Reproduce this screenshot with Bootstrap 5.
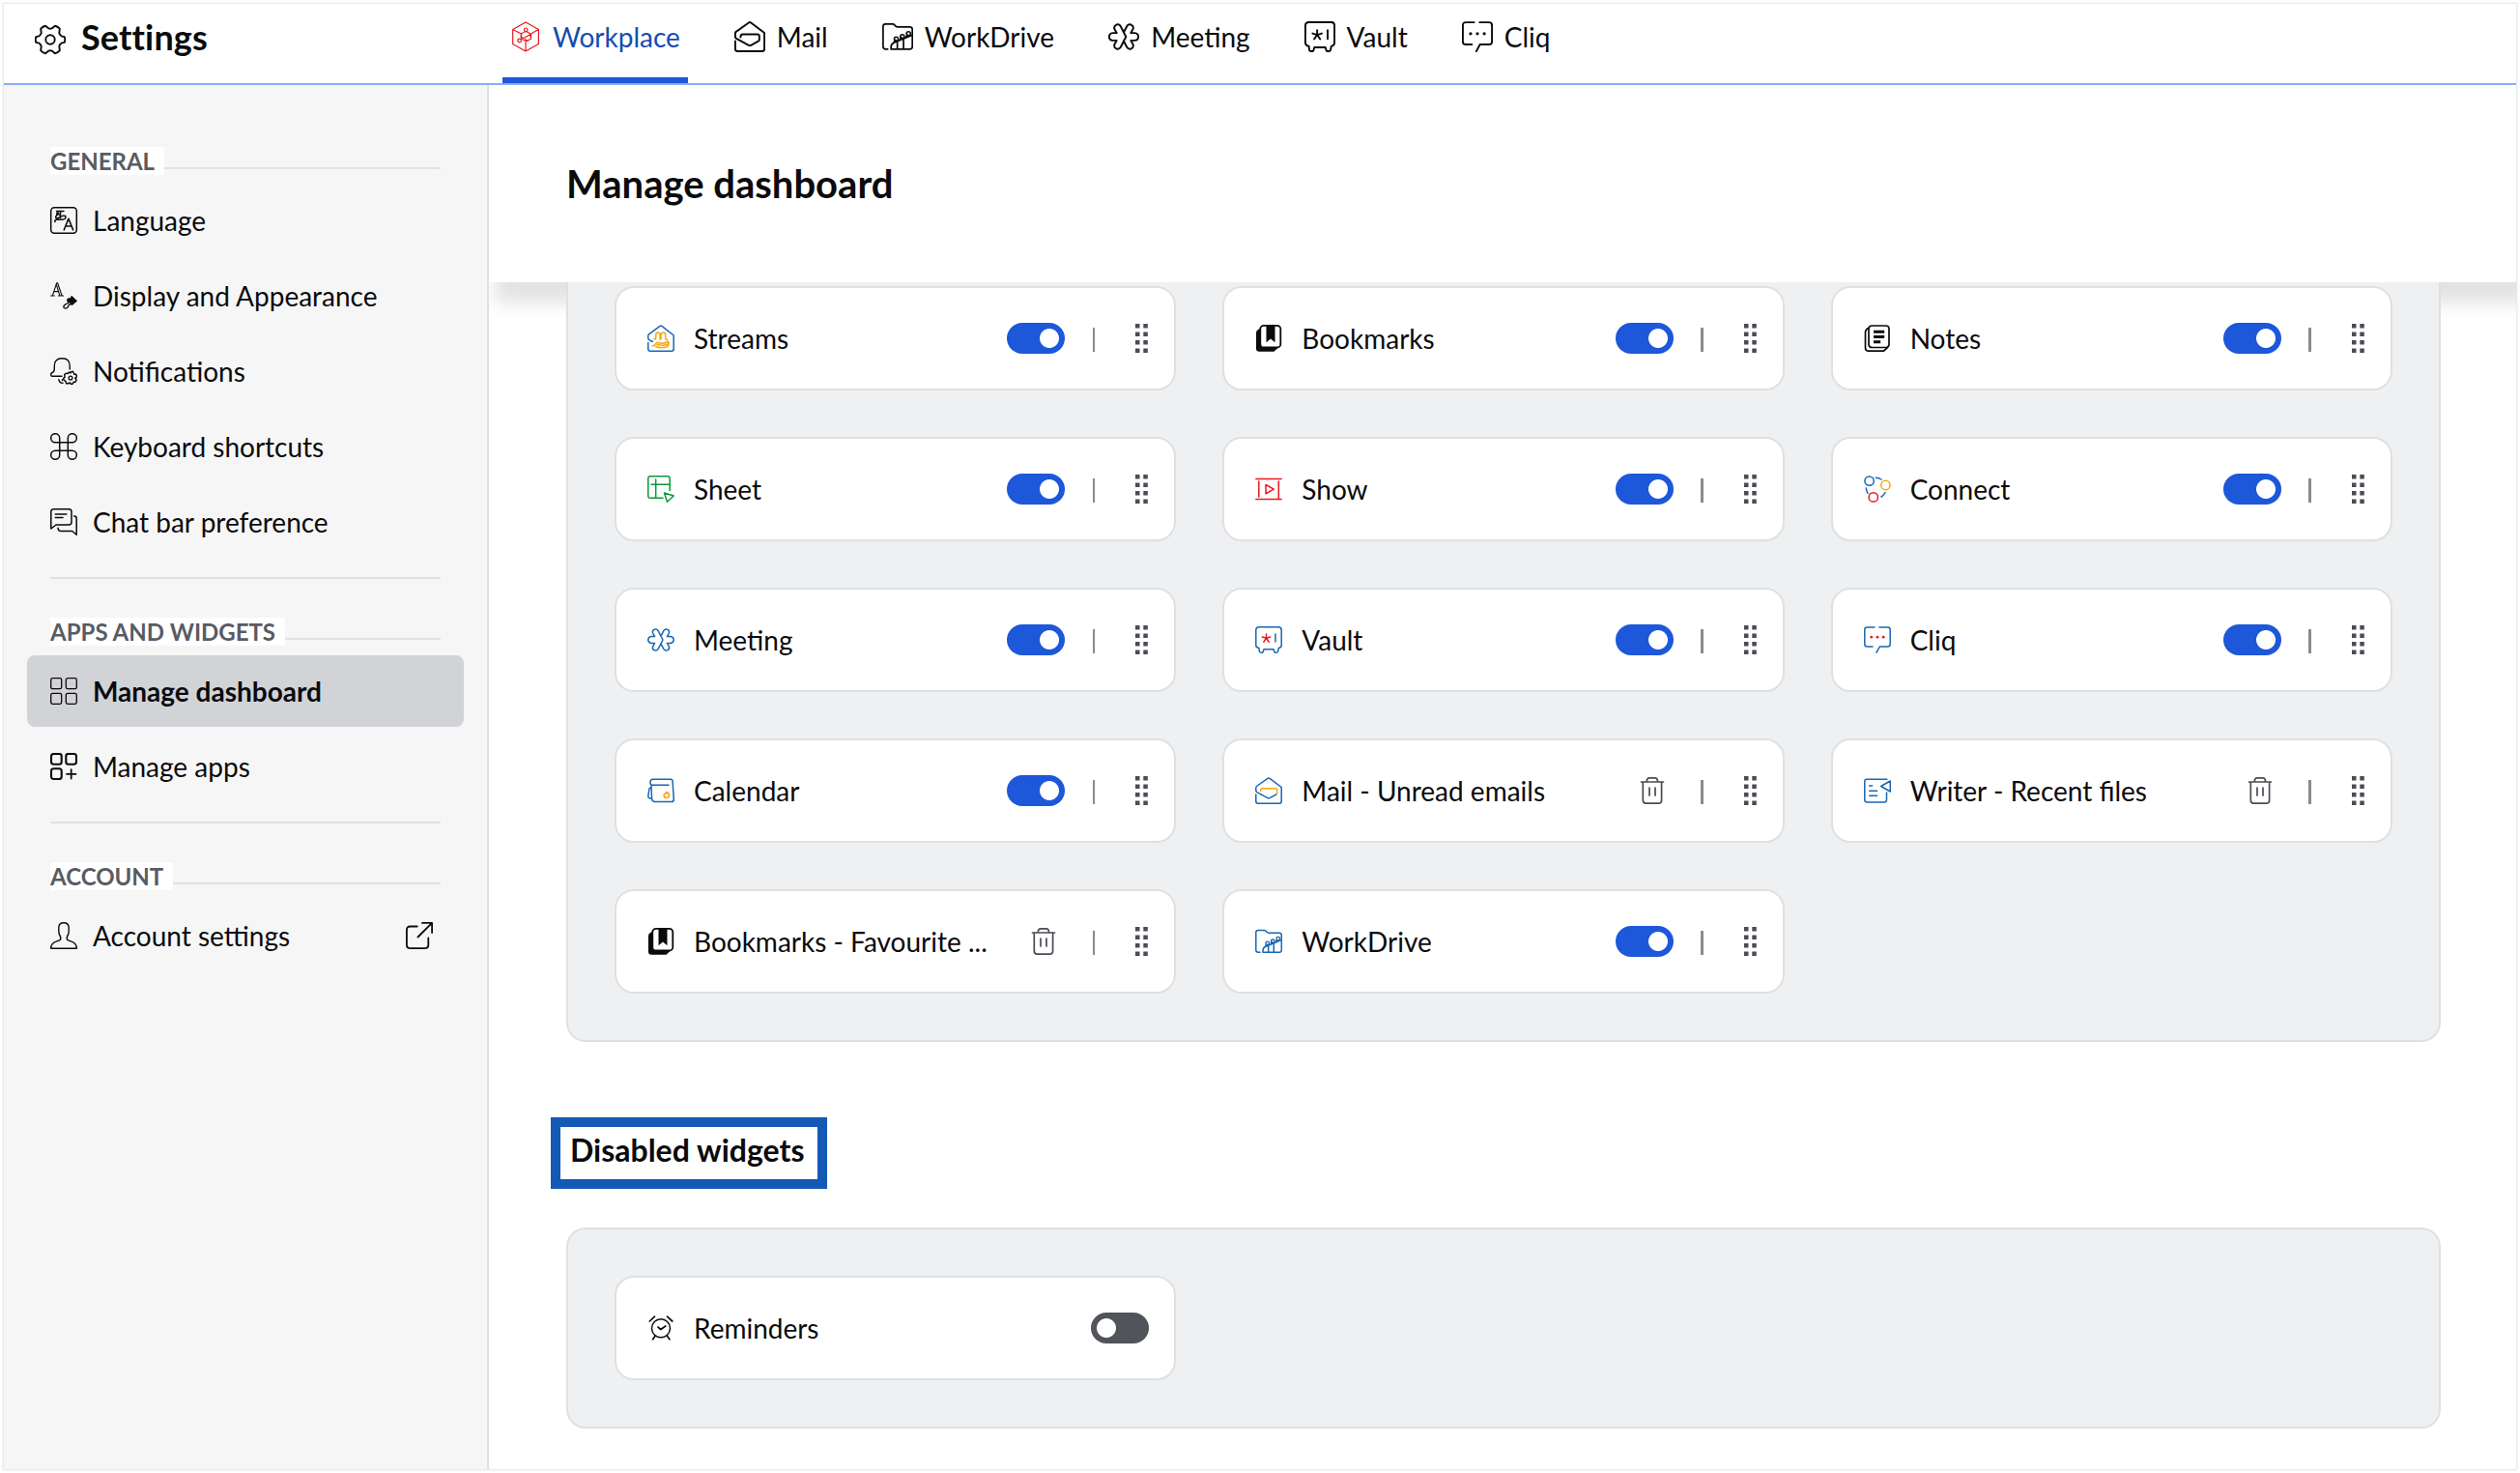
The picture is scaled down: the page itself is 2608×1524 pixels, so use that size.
<!DOCTYPE html>
<html lang="en">
<head>
<meta charset="utf-8">
<meta name="viewport" content="width=device-width, initial-scale=1">
<title>Settings</title>
<link href="https://cdn.jsdelivr.net/npm/bootstrap@5.3.0/dist/css/bootstrap.min.css" rel="stylesheet">
<style>
body{font-family:Lato,"Noto Sans",sans-serif;font-size:28px;line-height:34px;color:#0b0b0d;background:#fff;height:1524px;overflow:hidden;padding:3px}
.frame{height:1518px;border:1px solid #e6ebef;box-shadow:0 0 3px #e6ebef;overflow:hidden}
svg{fill:none;stroke-linecap:round;stroke-linejoin:round;flex:none;display:block}
.ic{width:28px;height:28px;stroke-width:1.5;--a:#0b0b0d;--b:#0b0b0d;--w:1.5;overflow:visible}
.ic-lg{width:32px;height:32px;--w:1.7}
.ic-blue{--a:#1767b5;--b:#e8191e}
.ic-amber{--b:#f9a50c}
.ic-grey{--a:#4a4c54}
.topbar{height:84px;border-bottom:2px solid #8badf9}
.brand{width:516px;padding:0 0 14px 32px;gap:16px;font-size:36px;font-weight:700;line-height:40px;letter-spacing:.15px}
.brand svg{position:relative;top:3px}
.tabs{gap:40px}
.tabs .nav-link{height:82px;border-bottom:6px solid transparent;gap:12px;color:#0b0b0d;padding:0 8px}
.tabs .nav-link{padding-bottom:8px}
.tabs .nav-link.active{border-color:#1d57da;color:#154cb3}
.side{width:502px;background:#f6f6f6;border-right:2px solid #dfe0e2;padding:64px 24px 0}
.sec-row{height:29px;margin:0 24px 10px;background:linear-gradient(#e0e1e2,#e0e1e2) 0 21px/100% 2px no-repeat}
.sec-row span{display:inline-block;height:29px;line-height:29px;background:#fff;padding-right:10px;font-size:24px;font-weight:700;color:#585b64;vertical-align:top}
.side .nav-link{height:74px;padding:0 24px;margin-bottom:4px;border-radius:8px;gap:16px;color:#0b0b0d}
.side .nav-link.active{background:#d2d3d7;font-weight:700}
.side-rule{height:2px;background:#e0e1e2;margin:16px 24px 40px}
.page-head{height:204px;background:#fff;box-shadow:0 28px 18px -6px rgba(0,0,0,.115);padding:0 80px;margin-right:-40px}
.page-head h1{font-size:40px;font-weight:700;line-height:48px;margin:78px 0 0}
.board{margin:0 78px 0 80px;position:relative;background:#eff0f2;border:2px solid #dfe0e2;border-radius:20px;padding:48px}
.board-cut{border-top:0;border-radius:0 0 20px 20px;padding-top:4px}
.tiles{display:grid;grid-template-columns:repeat(3,1fr);gap:48px}
.tile{height:108px;background:#fff;border:2px solid #dfe0e2;border-radius:20px;padding:0 27px 0 32px}
.tile .nm{margin-left:20px;margin-right:auto}
.tile .form-check-input{width:60px;height:32px;margin:0;border:0;border-radius:16px;float:none;background-color:#52545c;background-image:radial-gradient(circle at center,#fff 9.5px,transparent 10.4px)!important;background-size:20px 20px;background-position:6px center;background-repeat:no-repeat}
.tile .form-check-input:checked{background-color:#1d57da;background-position:34px center}
.bin{margin-right:8px}
.pipe{width:2.5px;height:25px;background:#8b8b8b;margin:3px 42px 0 28.4px}
.grip{width:13px;height:30px}
.tile-off{padding-right:26px}
.box-title{display:inline-block;border:10px solid #1359b5;margin:78px 0 40px 64px;width:286px;height:74px;padding-left:10px;font-size:32px;line-height:47px;font-weight:700;white-space:nowrap;vertical-align:top}
</style>
</head>
<body>
<svg width="0" height="0" class="position-absolute" aria-hidden="true">
<symbol id="gear" viewBox="0 0 32 32"><path stroke="var(--a)" stroke-width="1.9" d="M30.7 18.9Q31.8 16 30.7 13.1L27.5 12.3Q25.5 11 25.3 9.2L25.8 4.7Q23.5 2.3 20.9 1.8L17.6 4.4Q16 5 14.4 4.4L11.1 1.8Q8.5 2.3 6.2 4.7L6.7 9.2Q6.5 11 4.5 12.3L1.3 13.1Q.2 16 1.3 18.9L4.5 19.7Q6.5 21 6.7 22.8L6.2 27.3Q8.5 29.7 11.1 30.2L14.4 27.6Q16 27 17.6 27.6L20.9 30.2Q23.5 29.7 25.8 27.3L25.3 22.8Q25.5 21 27.5 19.7Z"/><circle cx="16" cy="16" r="4.7" stroke="var(--a)" stroke-width="1.9"/></symbol>
<symbol id="cube" viewBox="0 0 28 32"><path stroke="#e8191e" stroke-width="1.2" d="M14 1 27.4 8.5V23.5L14 31 .7 23.5V8.5ZM.7 8.5 9 12.7M27.4 8.5 19.5 13V18.5L14 20.5V31M14 18.5V31M9.5 12.5V18.5L16 20.5M14 10.5Q9 12 9 15.5M14 10.5Q19 11.5 19 16M9 16 12 17.6 19 13.5"/><g stroke="#e8191e" stroke-width="1.2"><circle cx="14.2" cy="8.8" r="1.8"/><circle cx="7.6" cy="20" r="1.8"/></g></symbol>
<symbol id="mail" viewBox="0 0 28 28"><path stroke="var(--a)" stroke-width="var(--w)" d="M.8 18V25Q.8 27.2 3 27.2H25Q27.2 27.2 27.2 25V10.5L15 1.3Q14 .6 13 1.3L1.5 9.5Q.8 10 .8 11.3V14Q.8 15 1.8 15.6L13 21.7Q14 22.2 15 21.7L22 17.8"/><path stroke="var(--b)" stroke-width="var(--w)" d="M5.6 14.5Q5.6 11.8 7.5 11.8H20.8Q22.6 11.8 22.6 13.5V17"/></symbol>
<symbol id="drive" viewBox="0 0 28 28"><path stroke="var(--a)" stroke-width="1.5" d="M5 25.3H3.2Q.8 25.3 .8 22.8V4.8Q.8 2.5 3 2.5H9.5Q10.5 2.5 11.2 3.4L12 4.3Q12.8 5.2 14 5.2H25Q27.3 5.2 27.3 7.5V23Q27.3 25.3 25 25.3H8V23.5Q8 20.5 10.5 19.5L27 12.6M13.7 25V18.5M19.3 25V16.3M10.3 19.5 12 17M15.8 17 17.5 14.5M21 14.8 22.7 12.5"/><g stroke="var(--a)" stroke-width="1.3"><circle cx="12.7" cy="16" r="1.8"/><circle cx="18.2" cy="13.8" r="1.8"/><circle cx="23.8" cy="11.2" r="1.8"/></g></symbol>
<symbol id="meet" viewBox="0 0 28 28"><path stroke="var(--a)" stroke-width="var(--w)" d="M16 14 11.2 4.6Q9.9 2.4 7.4 3.1Q4.7 4.2 5.6 7L7.6 10.6H4Q.8 11 .8 14T4 17.4H7.6L5.6 21Q4.7 23.8 7.4 24.9Q9.9 25.6 11.2 23.4ZM14.2 9.6 16.8 4.6Q18.1 2.4 20.6 3.1Q23.3 4.2 22.4 7L20.4 10.6H24Q27.2 11 27.2 14T24 17.4H20.4L22.4 21Q23.3 23.8 20.6 24.9Q18.1 25.6 16.8 23.4L14.2 18.4"/></symbol>
<symbol id="vault" viewBox="0 0 28 28"><path stroke="var(--a)" stroke-width="var(--w)" d="M4 22.6Q.8 22 .8 19.5V4Q.8 .8 4 .8H24Q27.2 .8 27.2 4V19.5Q27.2 22 24.3 22.6L23.6 26Q23.4 27.2 22 27.2H21Q20 27.2 19.7 26L19 23.7H9L8.3 26Q8 27.2 7 27.2H6Q4.6 27.2 4.4 26ZM21 8V16"/><path stroke="var(--b)" stroke-width="var(--w)" d="M11.5 12.3V8M11.5 12.3 7.3 11M11.5 12.3 8.8 16.2M11.5 12.3 14.2 16.2M11.5 12.3 15.7 11"/></symbol>
<symbol id="cliq" viewBox="0 0 28 28"><path stroke="var(--a)" stroke-width="var(--w)" d="M11 1H3.5Q.8 1 .8 3.5V18.5Q.8 21 3.5 21H9M16 1H24.5Q27.2 1 27.2 3.5V18.5Q27.2 21 24.5 21H16.3L13 27.2"/><g fill="var(--b)"><circle cx="7.8" cy="11.2" r="1.4"/><circle cx="14" cy="11.2" r="1.4"/><circle cx="20.2" cy="11.2" r="1.4"/></g></symbol>
<symbol id="bell" viewBox="0 0 28 28"><path stroke="var(--a)" stroke-width="1.4" d="M12 19.2H1.8Q.7 19 .7 17.8Q.7 15.5 2.7 15.2Q4.3 14.5 4.3 11V9Q4.3 .8 12.3 .8T20.2 9V12M8.8 22.6Q9.5 26.5 13 26.3M12.5 22.8V23.5"/><path stroke="var(--a)" stroke-width="1.5" d="M18.5 16.5Q20 13.8 21 16Q22 13.8 23.5 14.5L25 17.3H26.5Q28 19 27 20.5L25.8 21.2 27 23Q26.8 25.5 24.3 25.2L23.3 27Q21 28 20.5 26L17.5 27Q16 26.5 16 24.5L14.2 23.3Q13 21 15 20.5L14.8 17.5Q16 15.5 18.5 16.5Z"/><circle cx="21" cy="21" r="1.9" stroke="var(--a)" stroke-width="1.3"/></symbol>
<symbol id="cmd" viewBox="0 0 28 28"><path stroke="var(--a)" d="M9.7 5.2a4.5 4.5 0 1 0-4.5 4.5H22.8a4.5 4.5 0 1 0-4.5-4.5V22.8a4.5 4.5 0 1 0 4.5-4.5H5.2a4.5 4.5 0 1 0 4.5 4.5Z"/></symbol>
<symbol id="chat" viewBox="0 0 28 28"><path stroke="var(--a)" d="M.8 21V3.5Q.8 .8 3.5 .8H19.3Q22 .8 22 3.5V14.3Q22 17 19.3 17H6ZM5.3 6H16.8M5.3 9.6H13M24.7 8Q27.2 8 27.2 10.5V27.3L22.7 23.5H11Q8.2 23.5 8 20.3"/></symbol>
<symbol id="grid" viewBox="0 0 28 28"><g stroke="var(--a)" stroke-width="1.3"><rect x=".7" y=".7" width="11" height="11" rx="1.8"/><rect x="16.3" y=".7" width="11" height="11" rx="1.8"/><rect x=".7" y="16.3" width="11" height="11" rx="1.8"/><rect x="16.3" y="16.3" width="11" height="11" rx="1.8"/></g></symbol>
<symbol id="apps" viewBox="0 0 28 28"><g stroke="var(--a)" stroke-width="2.1"><rect x="1" y="1" width="10.7" height="10.7" rx="2.5"/><rect x="16.3" y="1" width="10.7" height="10.7" rx="2.5"/><rect x="1" y="16.3" width="10.7" height="10.7" rx="2.5"/></g><path stroke="var(--a)" stroke-width="1.8" d="M21.7 17.2V26.5M17 21.8H26.5"/></symbol>
<symbol id="user" viewBox="0 0 28 28"><path stroke="var(--a)" stroke-width="1.4" d="M14 .8Q19.2 .8 19.2 6V10Q19.2 12.5 17.5 15Q16.5 17.8 18.5 18.8L22 20.2Q27.3 22 27.3 27.3H.7Q.7 22 6 20.2L9.5 18.8Q11.5 17.8 10.5 15Q8.8 12.5 8.8 10V6Q8.8 .8 14 .8Z"/></symbol>
<symbol id="ext" viewBox="0 0 28 28"><path stroke="var(--a)" stroke-width="1.8" d="M11.7 4.5H4.7Q.9 4.5 .9 8.3V23.4Q.9 27.1 4.7 27.1H19.5Q23.3 27.1 23.3 23.4V16.5M17 .9H27.1V11M27.1 .9 12.5 15.5"/></symbol>
<symbol id="stream" viewBox="0 0 28 28"><path stroke="var(--a)" stroke-width="1.5" d="M.8 18.5V25Q.8 27.2 3 27.2H25Q27.2 27.2 27.2 25V11L15 1.3Q14 .6 13 1.3L1.5 9.8Q.8 10.4 .8 11.5V14Q.8 15 1.8 15.6L5.5 17.5"/><path stroke="var(--b)" stroke-width="1.5" d="M6.8 14.5Q8.8 16.2 8.8 13V10.5Q9 8 11 8T13 10.5V14Q13.2 16 14 14.5V10.5Q14.5 8 16.5 8T18.7 10.5V14Q19 15.8 20.8 15.5M5 21.7Q7.5 22 8.5 19.5Q10.5 17.8 13.5 19T21.5 17.5Q22.8 20 19.5 20.8T10 20.5M8.5 22.5Q13 24.5 20 23Q22.5 21.5 22 17.8"/></symbol>
<symbol id="book" viewBox="0 0 28 28"><path fill="#0b0b0d" d="M6 3 1.8 6Q1 7 1 9V24.5Q1 27.7 4.2 27.7H19.5L24 23.5Z"/><rect x="5.3" y=".9" width="21" height="22.6" rx="3.6" fill="#fff" stroke="#0b0b0d" stroke-width="1.8"/><path fill="#0b0b0d" d="M11.5 1H20.5V18.3L16 14.5 11.5 18.3Z"/></symbol>
<symbol id="notes" viewBox="0 0 28 28"><path stroke="var(--a)" stroke-width="1.7" d="M4.5 3.5Q1.5 5 1.5 8V23.8Q1.5 27.2 5 27.2H20.5L24 24M8.3 1H22.7Q26 1 26 4.3V20.2Q26 23.5 22.7 23.5H8.3Q5 23.5 5 20.2V4.3Q5 1 8.3 1Z"/><path stroke="var(--a)" stroke-width="3" stroke-linecap="butt" d="M10 7.3H21.2M10 12.5H21.2M10 17.7H17.2"/></symbol>
<symbol id="sheet" viewBox="0 0 28 28"><path stroke="#0a983e" d="M16 23.3H3Q.8 23.3 .8 21V3Q.8 .8 3 .8H21Q23.2 .8 23.2 3V15.5M8.7 4V23M4 9.2H23M17.5 18 27.2 21 20.5 27.2Z"/></symbol>
<symbol id="show" viewBox="0 0 28 28"><path stroke="#e8191e" d="M.8 3.5H27.2M.8 24.5H27.2M3.8 6V22M24.3 6V24M11 9.5V18.8L19.3 14.1Z"/></symbol>
<symbol id="conn" viewBox="0 0 28 28"><circle cx="5.6" cy="5.6" r="4.7" stroke="#1767b5"/><circle cx="22.4" cy="10" r="4.7" stroke="#f9a50c"/><circle cx="9.8" cy="22.4" r="4.7" stroke="#e8191e"/><path stroke="#1767b5" d="M12.3 2.3Q15.5 2.3 18 4M2.3 13Q2.5 16 4 18.3M18 22Q20.5 20.5 22 17.5"/></symbol>
<symbol id="cal" viewBox="0 0 28 28"><path stroke="var(--a)" d="M22 8.3H5.5Q3 8.3 3 6V4.8Q3 2.3 5.5 2.3H24Q26 2.3 26.1 4.3L27.3 22.8Q27.3 25.6 24.8 25.6H8Q5 25.6 4.6 22.5L4 9M4 11.5Q2.3 10.5 1.8 12.5L.8 20Q.8 22.2 4.3 22"/><path stroke="var(--b)" stroke-width="1.6" d="M19.3 15.5Q23 16.5 22.6 19.3Q22 21.5 19.7 21.5Q17 21.3 17.2 18.5Q17.5 16.5 20 17Z"/></symbol>
<symbol id="writer" viewBox="0 0 28 28"><path stroke="var(--a)" d="M23.8 2.2H3Q.8 2.2 .8 4.5V23.5Q.8 25.9 3 25.9H21.3Q23.5 25.9 23.5 23.5V16M5.7 9H8.6M5.7 14.3H13.6M5.7 19.2H13.6M27.3 4V15L17.7 9.5Z"/></symbol>
<symbol id="bin" viewBox="0 0 28 28"><path stroke="var(--a)" stroke-width="1.7" d="M2.5 5H25.5M8.3 4.6Q8.3 .9 11 .9H16.8Q19.5 .9 19.5 4.6M4.3 5V23.8Q4.3 27.2 7.5 27.2H20.3Q23.6 27.2 23.6 23.8V5M11 11V19M17 11V19"/></symbol>
<symbol id="alarm" viewBox="0 0 28 28"><circle cx="14" cy="14.2" r="9.5" stroke="var(--a)"/><path stroke="var(--a)" stroke-width="1.7" d="M11 13 13.8 15.5 18.8 12M2.3 7 7.5 2.2M20.5 2.2 25.8 7M8.3 22 5.5 25.7M20.3 22 23 25.7"/></symbol>
<symbol id="dots" viewBox="0 0 13 30"><path fill="#4a4c54" d="M0 0h4.5v4.5H0zM8.3 0h4.5v4.5H8.3zM0 8.5h4.5V13H0zM8.3 8.5h4.5V13H8.3zM0 17h4.5v4.5H0zM8.3 17h4.5v4.5H8.3zM0 25.5h4.5V30H0zM8.3 25.5h4.5V30H8.3z"/></symbol>
</svg>

<div class="frame d-flex flex-column">
  <header class="topbar d-flex flex-shrink-0">
    <div class="brand d-flex align-items-center"><svg class="ic ic-lg"><use href="#gear"/></svg><span>Settings</span></div>
    <nav class="nav tabs flex-nowrap">
      <a class="nav-link active d-flex align-items-center"><svg class="ic ic-lg"><use href="#cube"/></svg>Workplace</a>
      <a class="nav-link d-flex align-items-center"><svg class="ic ic-lg"><use href="#mail"/></svg>Mail</a>
      <a class="nav-link d-flex align-items-center"><svg class="ic ic-lg"><use href="#drive"/></svg>WorkDrive</a>
      <a class="nav-link d-flex align-items-center"><svg class="ic ic-lg"><use href="#meet"/></svg>Meeting</a>
      <a class="nav-link d-flex align-items-center"><svg class="ic ic-lg"><use href="#vault"/></svg>Vault</a>
      <a class="nav-link d-flex align-items-center"><svg class="ic ic-lg"><use href="#cliq"/></svg>Cliq</a>
    </nav>
  </header>
  <div class="d-flex flex-grow-1">
    <aside class="side flex-shrink-0">
      <div class="sec-row"><span>GENERAL</span></div>
      <nav class="nav flex-column">
        <a class="nav-link d-flex align-items-center"><svg class="ic" viewBox="0 0 28 28"><rect x=".7" y=".7" width="26.6" height="26.6" rx="3.5" stroke="#0b0b0d"/><path stroke="#0b0b0d" stroke-width="1.5" d="M6.5 4.6H14M10.5 4.6V11.5M6.8 8.5Q6.5 4.8 8.5 6.5M10.5 9Q9 7 7 8.5T6 11.5Q7.5 12.5 10 10.5T15.8 9.5Q16.8 13 12 13.2H6Q4.5 13.5 5 15.5"/><path stroke="#0b0b0d" stroke-width="1.6" d="M14.3 23.8 18.9 12.3 23.6 23.8M16 20H22"/></svg>Language</a>
        <a class="nav-link d-flex align-items-center"><svg class="ic" viewBox="0 0 28 28"><path stroke="#0b0b0d" stroke-width="1.1" d="M.6 14H4.4M8.4 14H13.6M2.4 13.8 6.6 .8H7.6L12 13.8M6.5 2.8 9.8 13.8M3.8 9.6H8.4"/><path fill="#0b0b0d" stroke="#0b0b0d" stroke-width="1" d="M22.3 14.6 27.5 19.3 23 23.3 17 18.3 19.3 16.6 20.8 17Z"/><path stroke="#0b0b0d" stroke-width="1.3" d="M18 19 18.8 21.5 15.2 23.2Q13 25 14.3 26.6Q16 28 18 26L20 22.6 22.6 23"/></svg>Display and Appearance</a>
        <a class="nav-link d-flex align-items-center"><svg class="ic"><use href="#bell"/></svg>Notifications</a>
        <a class="nav-link d-flex align-items-center"><svg class="ic"><use href="#cmd"/></svg>Keyboard shortcuts</a>
        <a class="nav-link d-flex align-items-center"><svg class="ic"><use href="#chat"/></svg>Chat bar preference</a>
      </nav>
      <div class="side-rule"></div>
      <div class="sec-row"><span>APPS AND WIDGETS</span></div>
      <nav class="nav flex-column">
        <a class="nav-link active d-flex align-items-center"><svg class="ic"><use href="#grid"/></svg>Manage dashboard</a>
        <a class="nav-link d-flex align-items-center"><svg class="ic"><use href="#apps"/></svg>Manage apps</a>
      </nav>
      <div class="side-rule"></div>
      <div class="sec-row"><span>ACCOUNT</span></div>
      <nav class="nav flex-column">
        <a class="nav-link d-flex align-items-center"><svg class="ic"><use href="#user"/></svg>Account settings<svg class="ic ms-auto me-2"><use href="#ext"/></svg></a>
      </nav>
    </aside>
    <main class="flex-grow-1 overflow-hidden">
      <div class="page-head d-flex"><h1>Manage dashboard</h1></div>
      <section class="board board-cut">
        <div class="tiles">
          <div class="tile d-flex align-items-center"><svg class="ic ic-blue ic-amber"><use href="#stream"/></svg><span class="nm">Streams</span><input class="form-check-input" type="checkbox" checked><i class="pipe"></i><svg class="grip"><use href="#dots"/></svg></div>
          <div class="tile d-flex align-items-center"><svg class="ic"><use href="#book"/></svg><span class="nm">Bookmarks</span><input class="form-check-input" type="checkbox" checked><i class="pipe"></i><svg class="grip"><use href="#dots"/></svg></div>
          <div class="tile d-flex align-items-center"><svg class="ic"><use href="#notes"/></svg><span class="nm">Notes</span><input class="form-check-input" type="checkbox" checked><i class="pipe"></i><svg class="grip"><use href="#dots"/></svg></div>
          <div class="tile d-flex align-items-center"><svg class="ic"><use href="#sheet"/></svg><span class="nm">Sheet</span><input class="form-check-input" type="checkbox" checked><i class="pipe"></i><svg class="grip"><use href="#dots"/></svg></div>
          <div class="tile d-flex align-items-center"><svg class="ic"><use href="#show"/></svg><span class="nm">Show</span><input class="form-check-input" type="checkbox" checked><i class="pipe"></i><svg class="grip"><use href="#dots"/></svg></div>
          <div class="tile d-flex align-items-center"><svg class="ic"><use href="#conn"/></svg><span class="nm">Connect</span><input class="form-check-input" type="checkbox" checked><i class="pipe"></i><svg class="grip"><use href="#dots"/></svg></div>
          <div class="tile d-flex align-items-center"><svg class="ic ic-blue"><use href="#meet"/></svg><span class="nm">Meeting</span><input class="form-check-input" type="checkbox" checked><i class="pipe"></i><svg class="grip"><use href="#dots"/></svg></div>
          <div class="tile d-flex align-items-center"><svg class="ic ic-blue"><use href="#vault"/></svg><span class="nm">Vault</span><input class="form-check-input" type="checkbox" checked><i class="pipe"></i><svg class="grip"><use href="#dots"/></svg></div>
          <div class="tile d-flex align-items-center"><svg class="ic ic-blue"><use href="#cliq"/></svg><span class="nm">Cliq</span><input class="form-check-input" type="checkbox" checked><i class="pipe"></i><svg class="grip"><use href="#dots"/></svg></div>
          <div class="tile d-flex align-items-center"><svg class="ic ic-blue ic-amber"><use href="#cal"/></svg><span class="nm">Calendar</span><input class="form-check-input" type="checkbox" checked><i class="pipe"></i><svg class="grip"><use href="#dots"/></svg></div>
          <div class="tile d-flex align-items-center"><svg class="ic ic-blue ic-amber"><use href="#mail"/></svg><span class="nm">Mail - Unread emails</span><svg class="ic ic-grey bin"><use href="#bin"/></svg><i class="pipe"></i><svg class="grip"><use href="#dots"/></svg></div>
          <div class="tile d-flex align-items-center"><svg class="ic ic-blue"><use href="#writer"/></svg><span class="nm">Writer - Recent files</span><svg class="ic ic-grey bin"><use href="#bin"/></svg><i class="pipe"></i><svg class="grip"><use href="#dots"/></svg></div>
          <div class="tile d-flex align-items-center"><svg class="ic"><use href="#book"/></svg><span class="nm">Bookmarks - Favourite ...</span><svg class="ic ic-grey bin"><use href="#bin"/></svg><i class="pipe"></i><svg class="grip"><use href="#dots"/></svg></div>
          <div class="tile d-flex align-items-center"><svg class="ic ic-blue"><use href="#drive"/></svg><span class="nm">WorkDrive</span><input class="form-check-input" type="checkbox" checked><i class="pipe"></i><svg class="grip"><use href="#dots"/></svg></div>
        </div>
      </section>
      <h2 class="box-title">Disabled widgets</h2>
      <section class="board">
        <div class="tiles">
          <div class="tile tile-off d-flex align-items-center"><svg class="ic"><use href="#alarm"/></svg><span class="nm">Reminders</span><input class="form-check-input" type="checkbox"></div>
        </div>
      </section>
    </main>
  </div>
</div>
<script src="https://cdn.jsdelivr.net/npm/bootstrap@5.3.0/dist/js/bootstrap.bundle.min.js"></script>
</body>
</html>
